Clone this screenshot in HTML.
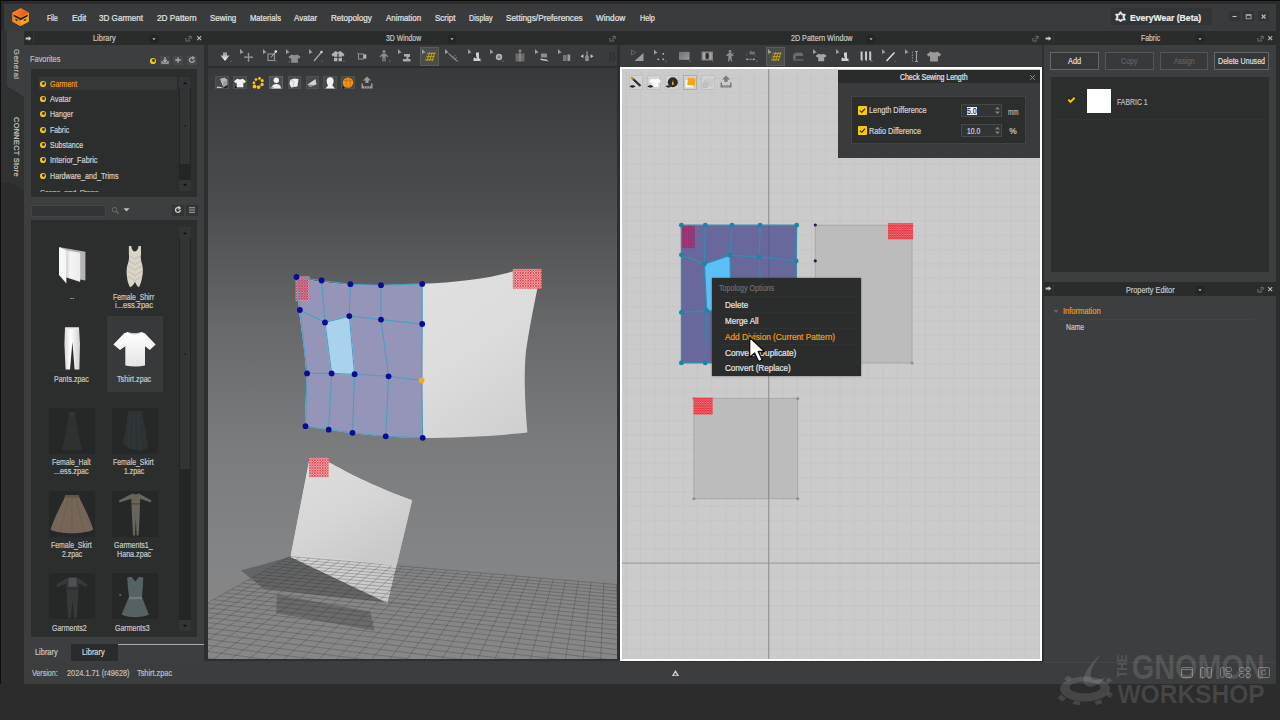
<!DOCTYPE html>
<html><head><meta charset="utf-8"><title>EveryWear</title>
<style>
html,body{margin:0;padding:0;background:#2b2c2b;}
body{width:1280px;height:720px;position:relative;overflow:hidden;font-family:"Liberation Sans",sans-serif;}
#app div,#app span,#app svg{position:absolute;box-sizing:border-box;}
#app span{white-space:pre;-webkit-text-stroke:0.22px currentColor;}
</style></head><body><div id="app">
<div style="left:0px;top:0px;width:1280px;height:4px;background:#2a2b2b;"></div>
<div style="left:0px;top:0px;width:1280px;height:1.4px;background:#0c0c0c;"></div>
<div style="left:4px;top:3.5px;width:1272px;height:680.5px;background:#3a3b3d;"></div>
<div style="left:0px;top:0px;width:4px;height:720px;background:#2a2b2b;"></div>
<div style="left:0px;top:0px;width:1.3px;height:720px;background:#0e0e0e;"></div>
<div style="left:4px;top:31px;width:20px;height:653px;background:#2b2c2b;"></div>
<div style="left:24px;top:31px;width:1252px;height:14px;background:#2a2b2b;"></div>
<span style="left:47.30px;top:11.95px;font-size:8.8px;line-height:12.3px;color:#e2e2e2;transform-origin:0 50%;transform:scaleX(0.7617);">File</span>
<span style="left:71.70px;top:11.95px;font-size:8.8px;line-height:12.3px;color:#e2e2e2;transform-origin:0 50%;transform:scaleX(0.9431);">Edit</span>
<span style="left:99.00px;top:11.95px;font-size:8.8px;line-height:12.3px;color:#e2e2e2;transform-origin:0 50%;transform:scaleX(0.9202);">3D Garment</span>
<span style="left:156.70px;top:11.95px;font-size:8.8px;line-height:12.3px;color:#e2e2e2;transform-origin:0 50%;transform:scaleX(0.9390);">2D Pattern</span>
<span style="left:209.80px;top:11.95px;font-size:8.8px;line-height:12.3px;color:#e2e2e2;transform-origin:0 50%;transform:scaleX(0.9113);">Sewing</span>
<span style="left:249.70px;top:11.95px;font-size:8.8px;line-height:12.3px;color:#e2e2e2;transform-origin:0 50%;transform:scaleX(0.8684);">Materials</span>
<span style="left:294.00px;top:11.95px;font-size:8.8px;line-height:12.3px;color:#e2e2e2;transform-origin:0 50%;transform:scaleX(0.9140);">Avatar</span>
<span style="left:330.60px;top:11.95px;font-size:8.8px;line-height:12.3px;color:#e2e2e2;transform-origin:0 50%;transform:scaleX(0.9188);">Retopology</span>
<span style="left:385.60px;top:11.95px;font-size:8.8px;line-height:12.3px;color:#e2e2e2;transform-origin:0 50%;transform:scaleX(0.8970);">Animation</span>
<span style="left:434.70px;top:11.95px;font-size:8.8px;line-height:12.3px;color:#e2e2e2;transform-origin:0 50%;transform:scaleX(0.9114);">Script</span>
<span style="left:468.70px;top:11.95px;font-size:8.8px;line-height:12.3px;color:#e2e2e2;transform-origin:0 50%;transform:scaleX(0.8179);">Display</span>
<span style="left:506.00px;top:11.95px;font-size:8.8px;line-height:12.3px;color:#e2e2e2;transform-origin:0 50%;transform:scaleX(0.9390);">Settings/Preferences</span>
<span style="left:596.00px;top:11.95px;font-size:8.8px;line-height:12.3px;color:#e2e2e2;transform-origin:0 50%;transform:scaleX(0.9298);">Window</span>
<span style="left:639.50px;top:11.95px;font-size:8.8px;line-height:12.3px;color:#e2e2e2;transform-origin:0 50%;transform:scaleX(0.8233);">Help</span>
<div style="left:24px;top:45px;width:180px;height:617px;background:#3d3e40;"></div>
<div style="left:31px;top:69px;width:166px;height:128px;background:#2c2d2d;"></div>
<div style="left:31px;top:220px;width:166px;height:417px;background:#2c2d2d;"></div>
<div style="left:206.5px;top:46px;width:411px;height:20px;background:#3a3b3d;"></div>
<div id="v3d" style="left:207.6px;top:68px;width:409.4px;height:591.2px;background:linear-gradient(#38393b 0%,#3c3d3f 4.6%,#4d4e50 24%,#676869 43.5%,#7a7b7c 63%,#838485 82%,#878788 100%);"></div>
<div style="left:621px;top:46px;width:421px;height:20px;background:#3a3b3d;"></div>
<div style="left:620.3px;top:67px;width:421.6px;height:593.8px;background:#ffffff;"></div>
<div style="left:622px;top:68.6px;width:417.7px;height:590px;background:#cbcbcb;"></div>
<div style="left:1044px;top:45px;width:232px;height:617px;background:#3d3e40;"></div>
<div style="left:1051px;top:77px;width:218px;height:195px;background:#2c2d2d;"></div>
<div style="left:1044px;top:282.4px;width:232px;height:14px;background:#2a2b2b;"></div>
<div style="left:204.3px;top:45px;width:3.3px;height:615.8px;background:#2e2f30;"></div>
<div style="left:204.3px;top:659.2px;width:413px;height:1.6px;background:#2f3031;"></div>
<div style="left:617px;top:45px;width:3.3px;height:616px;background:#2e2f30;"></div>
<div style="left:1041.9px;top:45px;width:1.8px;height:616.8px;background:#2e2f30;"></div>
<div style="left:620.3px;top:660.8px;width:421.6px;height:0.9px;background:#2e2f30;"></div>
<div style="left:24px;top:661.5px;width:1252px;height:22.3px;background:#3c3d3f;"></div>
<div style="left:1.3px;top:31px;width:5.7px;height:653px;background:#2b2c2b;"></div>
<div style="left:1.3px;top:31px;width:5.7px;height:152px;background:#313233;"></div>
<svg style="left:0;top:31px" width="24" height="160" viewBox="0 0 24 160"><path d="M7 0H24V66L7 55.5Z" fill="#3d3e40"/><path d="M7 56.5L24 67V159L7 150Z" fill="#303131"/></svg>
<span style="left:22.2px;top:48.5px;font-size:7.6px;line-height:12px;color:#b9b9b9;letter-spacing:0.495px;transform-origin:0 0;transform:rotate(90deg);">General</span>
<span style="left:22.2px;top:116.5px;font-size:7.4px;line-height:12px;color:#c4c4c4;letter-spacing:0.293px;transform-origin:0 0;transform:rotate(90deg);">CONNECT Store</span>
<svg style="left:23.5px;top:33.5px" width="9" height="9" viewBox="0 0 9 9"><path d="M1.6 3.5H4.6V2.2L7.4 4.5L4.6 6.8V5.5H1.6Z" fill="#c9c9c9"/></svg>
<div style="left:32.5px;top:33px;width:1px;height:11px;background:#353636;"></div>
<span style="left:93.00px;top:33.20px;font-size:8.4px;line-height:11.8px;color:#c4c4c4;transform-origin:0 50%;transform:scaleX(0.8842);">Library</span>
<svg style="left:149px;top:33.5px" width="10" height="10" viewBox="0 0 10 10"><circle cx="5" cy="5" r="4.6" fill="#232424"/><path d="M3.4 4.2H6.6L5 6.2Z" fill="#bdbdbd"/></svg>
<svg style="left:184.8px;top:34.6px" width="7" height="7" viewBox="0 0 8 8"><path d="M1 3.5V7H5V5M4 1.5H7V4.5M7 1.5L3.5 5" fill="none" stroke="#707172" stroke-width="1.1"/></svg>
<svg style="left:195.8px;top:34.8px" width="6.4" height="6.4" viewBox="0 0 8 8"><path d="M1.5 1.5L6.5 6.5M6.5 1.5L1.5 6.5" fill="none" stroke="#bdbdbd" stroke-width="1.3"/></svg>
<span style="left:30.00px;top:54.20px;font-size:8.4px;line-height:11.8px;color:#bdbdbd;transform-origin:0 50%;transform:scaleX(0.8830);">Favorites</span>
<svg style="left:148.5px;top:56.5px" width="8" height="8" viewBox="0 0 8 8"><circle cx="4" cy="4" r="3.1" fill="#f0c21a"/><circle cx="4.5" cy="3.5" r="1.45" fill="#4a2c1c"/></svg>
<div style="left:159.5px;top:55.6px;width:10.3px;height:9.7px;background:#47484a;"></div>
<svg style="left:160.7px;top:56.4px" width="8" height="8" viewBox="0 0 8 8"><path d="M4 1V5.5M2.3 4L4 5.8L5.7 4M1 5V7.2H7V5" fill="none" stroke="#ababab" stroke-width="1.3"/></svg>
<div style="left:173px;top:55.6px;width:10.3px;height:9.7px;background:#47484a;"></div>
<svg style="left:174.2px;top:56.4px" width="8" height="8" viewBox="0 0 8 8"><path d="M4 1.2V6.8M1.2 4H6.8" fill="none" stroke="#ababab" stroke-width="1.3"/></svg>
<div style="left:187px;top:55.6px;width:10.3px;height:9.7px;background:#47484a;"></div>
<svg style="left:188.2px;top:56.4px" width="8" height="8" viewBox="0 0 8 8"><path d="M6.3 4A2.4 2.4 0 1 1 4.6 1.7M4.3 0.6L6 1.9L4.4 3.2" fill="none" stroke="#ababab" stroke-width="1.3"/></svg>
<div style="left:38.5px;top:77px;width:138.5px;height:13px;background:#363738;"></div>
<svg style="left:39.3px;top:79.7px" width="8" height="8" viewBox="0 0 8 8"><circle cx="4" cy="4" r="3.1" fill="#f0c21a"/><circle cx="4.5" cy="3.5" r="1.45" fill="#4a2c1c"/></svg>
<span style="left:49.50px;top:78.70px;font-size:8.4px;line-height:11.8px;color:#f39c12;transform-origin:0 50%;transform:scaleX(0.8324);">Garment</span>
<svg style="left:39.3px;top:95.0px" width="8" height="8" viewBox="0 0 8 8"><circle cx="4" cy="4" r="3.1" fill="#f0c21a"/><circle cx="4.5" cy="3.5" r="1.45" fill="#4a2c1c"/></svg>
<span style="left:49.50px;top:94.00px;font-size:8.4px;line-height:11.8px;color:#cfcfcf;transform-origin:0 50%;transform:scaleX(0.8788);">Avatar</span>
<svg style="left:39.3px;top:110.3px" width="8" height="8" viewBox="0 0 8 8"><circle cx="4" cy="4" r="3.1" fill="#f0c21a"/><circle cx="4.5" cy="3.5" r="1.45" fill="#4a2c1c"/></svg>
<span style="left:49.50px;top:109.30px;font-size:8.4px;line-height:11.8px;color:#cfcfcf;transform-origin:0 50%;transform:scaleX(0.8422);">Hanger</span>
<svg style="left:39.3px;top:125.5px" width="8" height="8" viewBox="0 0 8 8"><circle cx="4" cy="4" r="3.1" fill="#f0c21a"/><circle cx="4.5" cy="3.5" r="1.45" fill="#4a2c1c"/></svg>
<span style="left:49.50px;top:124.50px;font-size:8.4px;line-height:11.8px;color:#cfcfcf;transform-origin:0 50%;transform:scaleX(0.8228);">Fabric</span>
<svg style="left:39.3px;top:140.89999999999998px" width="8" height="8" viewBox="0 0 8 8"><circle cx="4" cy="4" r="3.1" fill="#f0c21a"/><circle cx="4.5" cy="3.5" r="1.45" fill="#4a2c1c"/></svg>
<span style="left:49.50px;top:139.90px;font-size:8.4px;line-height:11.8px;color:#cfcfcf;transform-origin:0 50%;transform:scaleX(0.8364);">Substance</span>
<svg style="left:39.3px;top:156.2px" width="8" height="8" viewBox="0 0 8 8"><circle cx="4" cy="4" r="3.1" fill="#f0c21a"/><circle cx="4.5" cy="3.5" r="1.45" fill="#4a2c1c"/></svg>
<span style="left:49.50px;top:155.20px;font-size:8.4px;line-height:11.8px;color:#cfcfcf;transform-origin:0 50%;transform:scaleX(0.8809);">Interior_Fabric</span>
<svg style="left:39.3px;top:171.5px" width="8" height="8" viewBox="0 0 8 8"><circle cx="4" cy="4" r="3.1" fill="#f0c21a"/><circle cx="4.5" cy="3.5" r="1.45" fill="#4a2c1c"/></svg>
<span style="left:49.50px;top:170.50px;font-size:8.4px;line-height:11.8px;color:#cfcfcf;transform-origin:0 50%;transform:scaleX(0.8540);">Hardware_and_Trims</span>
<div style="left:38px;top:188px;width:70px;height:4px;overflow:hidden"><span style="left:2px;top:-1px;font-size:7.8px;line-height:11px;color:#bcbcbc;letter-spacing:-0.4px">Scene_and_Props</span></div>
<div style="left:178.5px;top:77px;width:12px;height:113.5px;background:#242525;"></div>
<div style="left:179.5px;top:88px;width:10px;height:76px;background:#323334;"></div>
<div style="left:178.5px;top:77px;width:12px;height:11px;background:#333435;"></div>
<div style="left:178.5px;top:179.5px;width:12px;height:11px;background:#333435;"></div>
<svg style="left:181.5px;top:79.5px" width="6" height="6" viewBox="0 0 6 6"><path d="M1 4.2L3 1.8L5 4.2Z" fill="#111"/></svg>
<svg style="left:181.5px;top:182.0px" width="6" height="6" viewBox="0 0 6 6"><path d="M1 1.8L3 4.2L5 1.8Z" fill="#111"/></svg>
<div style="left:183.5px;top:125.0px;width:2px;height:2px;background:#262727;"></div>
<div style="left:31px;top:205px;width:74.5px;height:11.5px;background:#333435;border:1px solid #434445;"></div>
<svg style="left:110px;top:205px" width="26" height="11" viewBox="0 0 26 11"><circle cx="4.6" cy="4.6" r="2.3" fill="none" stroke="#6e6e6e" stroke-width="1"/><path d="M6.4 6.4L8.6 8.6" stroke="#6e6e6e" stroke-width="1.2"/><path d="M13.5 3.2H19.5L16.5 6.6Z" fill="#c4c4c4"/></svg>
<div style="left:172px;top:204.5px;width:11.5px;height:11.5px;background:#333435;"></div>
<div style="left:186px;top:204.5px;width:11.5px;height:11.5px;background:#333435;"></div>
<svg style="left:173.7px;top:206.2px" width="8" height="8" viewBox="0 0 8 8"><path d="M6.3 4A2.4 2.4 0 1 1 4.6 1.7M4.3 0.4L6.2 1.9L4.4 3.4" fill="none" stroke="#cdcdcd" stroke-width="1.35"/></svg>
<svg style="left:187.7px;top:206.2px" width="8" height="8" viewBox="0 0 8 8"><path d="M1 1.5H7M1 3.2H7M1 4.9H7M1 6.6H7" fill="none" stroke="#8d8d8d" stroke-width="1"/></svg>
<div style="left:178.5px;top:227px;width:12px;height:404px;background:#242525;"></div>
<div style="left:179.5px;top:238px;width:10px;height:231px;background:#323334;"></div>
<div style="left:178.5px;top:227px;width:12px;height:11px;background:#333435;"></div>
<div style="left:178.5px;top:620px;width:12px;height:11px;background:#333435;"></div>
<svg style="left:181.5px;top:229.5px" width="6" height="6" viewBox="0 0 6 6"><path d="M1 4.2L3 1.8L5 4.2Z" fill="#111"/></svg>
<svg style="left:181.5px;top:622.5px" width="6" height="6" viewBox="0 0 6 6"><path d="M1 1.8L3 4.2L5 1.8Z" fill="#111"/></svg>
<div style="left:183.5px;top:352.5px;width:2px;height:2px;background:#262727;"></div>
<div style="left:71px;top:644px;width:46.5px;height:16.5px;background:#2a2b2c;"></div>
<div style="left:117.5px;top:643.9px;width:86.8px;height:1.2px;background:#a9a9a9;"></div>
<span style="left:35.00px;top:647.20px;font-size:8.4px;line-height:11.8px;color:#c4c4c4;transform-origin:0 50%;transform:scaleX(0.8842);">Library</span>
<span style="left:81.50px;top:646.70px;font-size:8.4px;line-height:11.8px;color:#d6d6d6;transform-origin:0 50%;transform:scaleX(0.8842);">Library</span>
<span style="left:31.50px;top:668.00px;font-size:8.4px;line-height:11.8px;color:#bdbdbd;transform-origin:0 50%;transform:scaleX(0.8468);">Version:</span>
<span style="left:66.50px;top:668.00px;font-size:8.4px;line-height:11.8px;color:#bdbdbd;transform-origin:0 50%;transform:scaleX(0.8776);">2024.1.71 (r49628)</span>
<span style="left:136.50px;top:668.00px;font-size:8.4px;line-height:11.8px;color:#bdbdbd;transform-origin:0 50%;transform:scaleX(0.8768);">Tshirt.zpac</span>
<svg style="left:56px;top:244px" width="32" height="44" viewBox="56 244 32 44">
<defs><linearGradient id="fg1" x1="0" y1="0" x2="1" y2="0"><stop offset="0" stop-color="#d0d0d0"/><stop offset="0.25" stop-color="#f4f4f4"/><stop offset="1" stop-color="#ececec"/></linearGradient></defs>
<path d="M60 247.2L85.4 251.8V280.4L80 279.5V282L66.4 277.5Z" fill="#b4b4b4"/>
<path d="M66.4 250.4L80.2 252.8V281.6L66.4 277.2Z" fill="url(#fg1)"/>
<path d="M59 247L66.4 250.2V283.6L59 275Z" fill="#f7f7f7"/>
</svg>
<span style="left:69.67px;top:290.90px;font-size:8.4px;line-height:11.8px;color:#c6c6c6;">..</span>
<svg style="left:122px;top:243px" width="26" height="46" viewBox="122 243 26 46">
<path d="M128.8 246.2C129.6 245.8 130.8 245.8 131.4 246.3C131.6 249 132.6 251.2 134.8 251.6C137 251.2 138.2 249 138.5 246.3C139.2 245.8 140.3 245.8 141 246.2C140.8 250 141.3 253 140.8 256C140.5 259 141.5 262 142.3 265C143.2 269 143 274 142 278C141.3 281.5 140.5 284.5 139 287.2C137.5 286.5 136 284.5 135 281.8C133.8 284.5 132 286.8 130 287.2C128.3 284 127.3 280.5 127 277C126.3 272 126.5 268 127.6 264.5C128.6 261.5 129.3 258.5 129 255.5C128.7 252.5 129 249.5 128.8 246.2Z" fill="#d8d4c6"/>
<path d="M130 256L134.8 259M129 261L134.8 264.5M128 266L134.8 270M127.6 271L134.8 275.5M128 276.5L134.6 280.5M139.8 256L134.8 259M140.8 261L134.8 264.5M141.8 266L134.8 270M142.2 271L134.8 275.5M141.6 276.5L135 280.5" stroke="#b7b2a3" stroke-width="0.7" fill="none"/>
</svg>
<span style="left:113.20px;top:291.60px;font-size:8.4px;line-height:11.8px;color:#c6c6c6;transform-origin:0 50%;transform:scaleX(0.8192);">Female_Shirr</span>
<span style="left:114.70px;top:300.30px;font-size:8.4px;line-height:11.8px;color:#c6c6c6;transform-origin:0 50%;transform:scaleX(0.9116);">i...ess.zpac</span>
<svg style="left:60.7px;top:326px" width="22" height="46" viewBox="0 0 22 46">
<defs><linearGradient id="pg" x1="0" y1="0" x2="1" y2="0"><stop offset="0" stop-color="#d8d8d8"/><stop offset="0.4" stop-color="#ffffff"/><stop offset="1" stop-color="#cfcfcf"/></linearGradient></defs>
<path d="M4 1.5H18L19 18L18.4 43.5H13.6L11.4 16L9 43.5H4.6L3.4 18Z" fill="url(#pg)"/>
<path d="M4 1.5H18V3.2H4Z" fill="#e8e8e8"/>
</svg>
<div style="left:48.5px;top:369.6px;width:17px;height:1.2px;background:#323333;"></div>
<span style="left:53.75px;top:374.20px;font-size:8.4px;line-height:11.8px;color:#c6c6c6;transform-origin:0 50%;transform:scaleX(0.8374);">Pants.zpac</span>
<div style="left:106.5px;top:316px;width:56px;height:76px;background:#38393b;"></div>
<svg style="left:111px;top:329px" width="46" height="40" viewBox="111 329 46 40">
<defs><linearGradient id="tg" x1="0" y1="0" x2="0" y2="1"><stop offset="0" stop-color="#ffffff"/><stop offset="1" stop-color="#e4e4e4"/></linearGradient></defs>
<path d="M127.8 332C130.5 334 138.5 334 141.2 332L144.8 333.2L155.6 344.6L149.8 350L145 346.2V365.4C139 366.8 131.5 366.8 125.3 365.4V346.2L120 350L113.4 344.6L124.2 333.2Z" fill="url(#tg)"/>
<path d="M127.8 332C130.5 335.2 138.5 335.2 141.2 332C138.5 333.4 130.5 333.4 127.8 332Z" fill="#c4c4c4"/>
</svg>
<span style="left:116.70px;top:374.20px;font-size:8.4px;line-height:11.8px;color:#c6c6c6;transform-origin:0 50%;transform:scaleX(0.8544);">Tshirt.zpac</span>
<svg style="left:49px;top:408px" width="46" height="46" viewBox="0 0 46 46"><rect width="46" height="46" fill="#262727"/><path d="M20 4H26L27 12L33 42H13L19 12Z" fill="#2f3030"/><path d="M21 4L23 9L25 4" stroke="#3a3a3a" fill="none"/></svg>
<svg style="left:111.5px;top:408px" width="46" height="46" viewBox="0 0 46 46"><rect width="46" height="46" fill="#262727"/><path d="M16 3H30L33 20L36 40L28 43L18 41L11 36L14 20Z" fill="#2d3335"/><path d="M18 6L16 38M22 6L22 41M26 6L28 42" stroke="#353c3f" stroke-width="0.8"/></svg>
<span style="left:52.45px;top:457.20px;font-size:8.4px;line-height:11.8px;color:#c6c6c6;transform-origin:0 50%;transform:scaleX(0.8148);">Female_Halt</span>
<span style="left:54.45px;top:466.10px;font-size:8.4px;line-height:11.8px;color:#c6c6c6;transform-origin:0 50%;transform:scaleX(0.8668);">...ess.zpac</span>
<span style="left:113.45px;top:457.20px;font-size:8.4px;line-height:11.8px;color:#c6c6c6;transform-origin:0 50%;transform:scaleX(0.8246);">Female_Skirt</span>
<span style="left:123.70px;top:466.10px;font-size:8.4px;line-height:11.8px;color:#c6c6c6;transform-origin:0 50%;transform:scaleX(0.8203);">1.zpac</span>
<svg style="left:49px;top:491px" width="46" height="46" viewBox="0 0 46 46"><rect width="46" height="46" fill="#262727"/><path d="M16.5 4H29.3L31 8C36 18 41 28 44.3 38.5C36 43.5 10 43.5 1.5 38.5C5 28 10 18 15 8Z" fill="#76665a"/><path d="M16.5 4H29.3L30.5 7H15.5Z" fill="#665848"/><path d="M19 8L11 41M23 8V42.3M27 8L35 41" stroke="#6b5c4f" stroke-width="0.9"/></svg>
<svg style="left:111.5px;top:491px" width="46" height="46" viewBox="0 0 46 46"><rect width="46" height="46" fill="#262727"/><path d="M20.5 2.5L23.8 3.5L27 2.5L39.5 9.6L38.8 11.6L28.3 7.8L28 13L27.6 26L26.6 44.5H24.6L23.8 27L23 44.5H21L20 26L19.5 13L19.3 7.8L7.5 11.6L6.8 9.6Z" fill="#67655a"/><path d="M19.5 12H28V13.6H19.5Z" fill="#4f4d45"/></svg>
<span style="left:51.45px;top:539.90px;font-size:8.4px;line-height:11.8px;color:#c6c6c6;transform-origin:0 50%;transform:scaleX(0.8246);">Female_Skirt</span>
<span style="left:61.70px;top:548.70px;font-size:8.4px;line-height:11.8px;color:#c6c6c6;transform-origin:0 50%;transform:scaleX(0.8203);">2.zpac</span>
<span style="left:114.45px;top:539.90px;font-size:8.4px;line-height:11.8px;color:#c6c6c6;transform-origin:0 50%;transform:scaleX(0.8395);">Garments1_</span>
<span style="left:116.70px;top:548.70px;font-size:8.4px;line-height:11.8px;color:#c6c6c6;transform-origin:0 50%;transform:scaleX(0.8542);">Hana.zpac</span>
<svg style="left:49px;top:573px" width="46" height="46" viewBox="0 0 46 46"><rect width="46" height="46" fill="#262727"/><path d="M17 5.5L21 4H26L30 5.5L38.5 11.5L37.5 14L29.5 10.5V15.5L28.8 30L27.8 45H25.2L23.5 27L21.8 45H19.2L18.2 30L17.5 15.5V10.5L8.5 14L7.5 11.5Z" fill="#37383a"/><path d="M19.5 5H27.5V13.5H19.5Z" fill="#4f5052"/><path d="M17.5 15H29.5V16.5H17.5Z" fill="#2d2e2f"/></svg>
<svg style="left:111.5px;top:573px" width="46" height="46" viewBox="0 0 46 46"><rect width="46" height="46" fill="#262727"/><path d="M15.2 4.5L19.5 3.8L23.3 8.5L27 3.8L31.3 4.5L30.8 14L30 24L36.8 41.5C30 45 16 45 9.5 41.5L17 24L15.8 14Z" fill="#566164"/><path d="M17 23.8H30V26.2H17Z" fill="#707a7b"/><circle cx="8.2" cy="22" r="1" fill="#6a6a62"/></svg>
<span style="left:52.25px;top:622.60px;font-size:8.4px;line-height:11.8px;color:#c6c6c6;transform-origin:0 50%;transform:scaleX(0.8376);">Garments2</span>
<span style="left:114.85px;top:622.60px;font-size:8.4px;line-height:11.8px;color:#c6c6c6;transform-origin:0 50%;transform:scaleX(0.8376);">Garments3</span>
<div style="left:420px;top:46.5px;width:19px;height:19px;background:#4b4c4e;border:1px solid #5b5c5e;"></div>
<svg style="left:216.5px;top:48.0px" width="16" height="16" viewBox="0 0 16 16"><defs><linearGradient id="da" x1="0" y1="0" x2="0" y2="1"><stop offset="0" stop-color="#8a8a8a"/><stop offset="1" stop-color="#ffffff"/></linearGradient></defs><path d="M6 4.3H10V7.6H12.6L8 12.9L3.4 7.6H6Z" fill="url(#da)"/><rect x="13.3" y="12.6" width="1.3" height="1.3" fill="#6d6d6d"/></svg>
<svg style="left:238.5px;top:48.0px" width="16" height="16" viewBox="0 0 16 16"><path d="M1 1L1 6.2L2.6 4.9L4.6 4.6Z" fill="#9d9d9d"/><path d="M9.5 5.5V13M5.8 9.2H13.2" stroke="#9a9a9a" stroke-width="1.2"/><path d="M9.5 4.5L10.7 6.2H8.3ZM9.5 14L10.7 12.3H8.3ZM4.8 9.2L6.5 8V10.4ZM14.2 9.2L12.5 8V10.4Z" fill="#9a9a9a"/></svg>
<svg style="left:262.0px;top:48.0px" width="16" height="16" viewBox="0 0 16 16"><path d="M1 1L1 6.2L2.6 4.9L4.6 4.6Z" fill="#9d9d9d"/><rect x="6" y="6" width="6.5" height="6.5" fill="none" stroke="#909090" stroke-width="1.2"/><path d="M9 9.5L13.5 4" stroke="#b9b9b9" stroke-width="1"/><circle cx="13.8" cy="3.6" r="1.3" fill="#e6e6e6"/><rect x="13.3" y="12.6" width="1.3" height="1.3" fill="#6d6d6d"/></svg>
<svg style="left:285.0px;top:48.0px" width="16" height="16" viewBox="0 0 16 16"><path d="M1 1L1 6.2L2.6 4.9L4.6 4.6Z" fill="#9d9d9d"/><path d="M5.2 4.6C6.5 5.6 9.5 5.6 10.8 4.6L14 7L12.5 9L11.3 8.2V13H4.7V8.2L3.5 9L2 7Z" fill="#8f8f8f" transform="translate(1.5,1.8)"/><path d="M5 13.5L3.8 14.5M12 13.5L13.2 14.5" stroke="#8f8f8f"/></svg>
<svg style="left:307.5px;top:48.0px" width="16" height="16" viewBox="0 0 16 16"><path d="M1 1L1 6.2L2.6 4.9L4.6 4.6Z" fill="#9d9d9d"/><path d="M6 13L13.2 4.5" stroke="#a9a9a9" stroke-width="1.2"/><circle cx="13.5" cy="4" r="1.2" fill="#dcdcdc"/><rect x="13.3" y="12.6" width="1.3" height="1.3" fill="#6d6d6d"/></svg>
<svg style="left:330.0px;top:48.0px" width="16" height="16" viewBox="0 0 16 16"><path d="M5.5 3L8 4.2L10.5 3L14.5 6.5L13.2 8.4L12 7.6V13.2H8.6V5.5H7.4V13.2H4V7.6L2.8 8.4L1.5 6.5Z" fill="#b4b4b4"/><path d="M4 9.3H12" stroke="#3a3b3d" stroke-width="1"/><rect x="13.3" y="12.6" width="1.3" height="1.3" fill="#6d6d6d"/></svg>
<svg style="left:352.5px;top:48.0px" width="16" height="16" viewBox="0 0 16 16"><rect x="5.5" y="6" width="5" height="5" fill="none" stroke="#8f8f8f" stroke-width="1.1"/><path d="M10.5 7L13.2 6V11L10.5 10Z" fill="#b9b9b9"/><rect x="4" y="4.5" width="1.2" height="1.2" fill="#777"/></svg>
<svg style="left:375.5px;top:48.0px" width="16" height="16" viewBox="0 0 16 16"><circle cx="8" cy="3.6" r="1.5" fill="#8d8d8d"/><path d="M6.6 5.5H9.4L12.4 8.3L11.6 9.2L9.6 7.8V13.5H8.4V10H7.6V13.5H6.4V7.8L4.4 9.2L3.6 8.3Z" fill="#8d8d8d"/><rect x="13.3" y="12.6" width="1.3" height="1.3" fill="#6d6d6d"/></svg>
<svg style="left:397.0px;top:48.0px" width="16" height="16" viewBox="0 0 16 16"><path d="M1 1L1 6.2L2.6 4.9L4.6 4.6Z" fill="#9d9d9d"/><path d="M7 6H13V9H11.5V11H13.5V13.5H6V11H9.5V8.5H7Z" fill="#a9a9a9"/></svg>
<svg style="left:421.0px;top:48.0px" width="16" height="16" viewBox="0 0 16 16"><path d="M1 1L1 6.2L2.6 4.9L4.6 4.6Z" fill="#9d9d9d"/><g stroke="#d4ae00" stroke-width="0.85" fill="none"><path d="M6.2 5.4H14.4M5.2 8.6H13.4M4.2 11.8H12.4"/><path d="M8.6 4.2L6 13M11.2 4.2L8.6 13M13.8 4.2L11.2 13"/></g><path d="M6.4 4.6L4 12.6" stroke="#7c6a10" stroke-width="0.8"/></svg>
<svg style="left:443.5px;top:48.0px" width="16" height="16" viewBox="0 0 16 16"><path d="M1 1L1 6.2L2.6 4.9L4.6 4.6Z" fill="#9d9d9d"/><path d="M4.5 5.5L13 13" stroke="#8a8a8a" stroke-width="1.2"/><path d="M8 10.5L11.5 7M10 12L13 9" stroke="#777" stroke-width="1"/><rect x="13.3" y="12.6" width="1.3" height="1.3" fill="#6d6d6d"/></svg>
<svg style="left:467.0px;top:48.0px" width="16" height="16" viewBox="0 0 16 16"><path d="M1 1L1 6.2L2.6 4.9L4.6 4.6Z" fill="#9d9d9d"/><path d="M9 4.5H12V10.5H13.5V13H6.5V10.5L9 8Z" fill="#cfcfcf"/><path d="M6.5 7L9.5 10" stroke="#2a2a2a" stroke-width="1.4"/><rect x="13.3" y="12.6" width="1.3" height="1.3" fill="#6d6d6d"/></svg>
<svg style="left:488.5px;top:48.0px" width="16" height="16" viewBox="0 0 16 16"><path d="M1 1L1 6.2L2.6 4.9L4.6 4.6Z" fill="#9d9d9d"/><circle cx="10" cy="9" r="3.2" fill="#b5b5b5"/><rect x="8.6" y="7.6" width="2.8" height="2.8" fill="#7d7d7d"/><rect x="13.3" y="12.6" width="1.3" height="1.3" fill="#6d6d6d"/></svg>
<svg style="left:511.5px;top:48.0px" width="16" height="16" viewBox="0 0 16 16"><circle cx="8" cy="2.8" r="1.4" fill="#8d8d8d"/><path d="M3.5 5.5H12.5V13.5H3.5Z" fill="#6b6b6b"/><path d="M7.2 4.5H8.8V13.5H7.2Z" fill="#8b8b8b"/></svg>
<svg style="left:534.0px;top:48.0px" width="16" height="16" viewBox="0 0 16 16"><path d="M1 1L1 6.2L2.6 4.9L4.6 4.6Z" fill="#9d9d9d"/><path d="M7 5.5H13V9.5H7Z" fill="#8d8d8d"/><path d="M6.5 10.5L13.5 11.8V13.2L6.5 12Z" fill="#c6c6c6"/><rect x="13.3" y="12.6" width="1.3" height="1.3" fill="#6d6d6d"/></svg>
<svg style="left:557.0px;top:48.0px" width="16" height="16" viewBox="0 0 16 16"><path d="M1 1L1 6.2L2.6 4.9L4.6 4.6Z" fill="#9d9d9d"/><path d="M6 7H9.6V13H6Z" fill="#777"/><path d="M10.4 6.5H13.2V13H10.4Z" fill="#9b9b9b"/></svg>
<svg style="left:579.0px;top:48.0px" width="16" height="16" viewBox="0 0 16 16"><path d="M7.3 3.5H8.7V7L9.8 8.5V13H6.2V8.5L7.3 7Z" fill="#8f8f8f"/><path d="M1.5 8.2L4.4 6.3V10.1ZM14.5 8.2L11.6 6.3V10.1Z" fill="#c9c9c9"/></svg>
<svg style="left:608px;top:51px" width="9" height="12" viewBox="0 0 9 12"><path d="M1.5 1.5C3.5 4 3.5 8 1.5 10.5M5 1.5C7 4 7 8 5 10.5" fill="none" stroke="#2b2c2c" stroke-width="1.3"/></svg>
<div style="left:206.5px;top:66px;width:411px;height:2px;background:#2b2c2d;"></div>
<div style="left:766px;top:46.5px;width:19px;height:19px;background:#4b4c4e;border:1px solid #5b5c5e;"></div>
<svg style="left:630.0px;top:48.0px" width="16" height="16" viewBox="0 0 16 16"><path d="M1.5 2L1.5 7L5.5 4.5Z" fill="none" stroke="#6a6a6a" stroke-width="0.9"/><path d="M13.5 5V13H4.5Z" fill="#9a9a9a"/></svg>
<svg style="left:652.0px;top:48.0px" width="16" height="16" viewBox="0 0 16 16"><path d="M2 1.5L2 6.7L3.6 5.4L5.6 5.1Z" fill="#9d9d9d"/><g fill="#b5b5b5"><rect x="10.5" y="5" width="1.6" height="1.6"/><rect x="5.5" y="10.5" width="1.6" height="1.6"/><rect x="10.5" y="10.5" width="1.6" height="1.6"/></g><rect x="13.3" y="12.6" width="1.3" height="1.3" fill="#6d6d6d"/></svg>
<svg style="left:676.0px;top:48.0px" width="16" height="16" viewBox="0 0 16 16"><defs><linearGradient id="rg" x1="0" y1="0" x2="1" y2="1"><stop offset="0" stop-color="#707070"/><stop offset="1" stop-color="#9c9c9c"/></linearGradient></defs><rect x="3" y="3.8" width="10.5" height="8" fill="url(#rg)"/><rect x="13.3" y="12.6" width="1.3" height="1.3" fill="#6d6d6d"/></svg>
<svg style="left:698.5px;top:48.0px" width="16" height="16" viewBox="0 0 16 16"><rect x="2.5" y="3.5" width="11.5" height="9" fill="#808080"/><rect x="4" y="4.5" width="2" height="7" fill="#a9a9a9"/><rect x="10.5" y="4.5" width="2" height="7" fill="#a9a9a9"/><ellipse cx="8.2" cy="8" rx="1.6" ry="3" fill="#2b2b2b"/><rect x="13.3" y="12.6" width="1.3" height="1.3" fill="#6d6d6d"/></svg>
<svg style="left:722.0px;top:48.0px" width="16" height="16" viewBox="0 0 16 16"><circle cx="8" cy="3.4" r="1.4" fill="#8d8d8d"/><path d="M6.8 5H9.2L11.8 7.2L11 8.2L9.6 7.4V10L10.2 13.5H9L8 10.5L7 13.5H5.8L6.4 10V7.4L5 8.2L4.2 7.2Z" fill="#8d8d8d"/><path d="M10.5 4.5L12 6" stroke="#6a6a6a"/></svg>
<svg style="left:743.0px;top:48.0px" width="16" height="16" viewBox="0 0 16 16"><path d="M6.5 3.5C7.5 2.5 9 3 9.5 4C10.5 3 12 3.5 12 5V6.5H6.5Z" fill="#707070"/><g fill="#c4c4c4"><rect x="3.4" y="10.6" width="1.5" height="1.5"/><rect x="10.2" y="10.6" width="1.5" height="1.5"/></g><path d="M5.5 11.4H9.6" stroke="#8f8f8f" stroke-width="0.9"/><path d="M3.5 5V9M12.5 7.5V9.5" stroke="#606060" stroke-width="0.9" stroke-dasharray="1 1"/><rect x="13.3" y="12.6" width="1.3" height="1.3" fill="#6d6d6d"/></svg>
<svg style="left:767.0px;top:48.0px" width="16" height="16" viewBox="0 0 16 16"><path d="M1 1L1 6.2L2.6 4.9L4.6 4.6Z" fill="#9d9d9d"/><g stroke="#d4ae00" stroke-width="0.85" fill="none"><path d="M6.2 5.4H14.4M5.2 8.6H13.4M4.2 11.8H12.4"/><path d="M8.6 4.2L6 13M11.2 4.2L8.6 13M13.8 4.2L11.2 13"/></g><path d="M6.4 4.6L4 12.6" stroke="#7c6a10" stroke-width="0.8"/></svg>
<svg style="left:790.0px;top:48.0px" width="16" height="16" viewBox="0 0 16 16"><path d="M3 12.5V8.5C3 6 5 4.6 7.5 4.6H10.5C12 4.6 13 5.6 13 7V8H7C6 8 5.6 8.6 5.6 9.5V12.5Z" fill="#6c6c6c"/><path d="M3 11H13.5V12.8H3Z" fill="#5c5c5c"/></svg>
<svg style="left:811.5px;top:48.0px" width="16" height="16" viewBox="0 0 16 16"><path d="M1 1L1 6.2L2.6 4.9L4.6 4.6Z" fill="#9d9d9d"/><path d="M5.2 4.6C6.5 5.6 9.5 5.6 10.8 4.6L14 7L12.5 9L11.3 8.2V13H4.7V8.2L3.5 9L2 7Z" fill="#a5a5a5" transform="translate(2,1.5) scale(0.9)"/></svg>
<svg style="left:834.5px;top:48.0px" width="16" height="16" viewBox="0 0 16 16"><path d="M1 1L1 6.2L2.6 4.9L4.6 4.6Z" fill="#9d9d9d"/><path d="M9 4.5H12V10.5H13.5V13H6.5V10.5L9 8Z" fill="#cfcfcf"/><path d="M6.5 7L9.5 10" stroke="#2a2a2a" stroke-width="1.4"/><rect x="13.3" y="12.6" width="1.3" height="1.3" fill="#6d6d6d"/></svg>
<svg style="left:857.5px;top:48.0px" width="16" height="16" viewBox="0 0 16 16"><path d="M3.6 3.5V12M8 3.5V12M12.2 3.5V12" stroke="#c9c9c9" stroke-width="2"/><path d="M3.6 12L4.6 13M8 12L9 13M12.2 12L13.2 13" stroke="#9b9b9b" stroke-width="1.2"/><rect x="13.3" y="12.6" width="1.3" height="1.3" fill="#6d6d6d"/></svg>
<svg style="left:880.5px;top:48.0px" width="16" height="16" viewBox="0 0 16 16"><path d="M1 1L1 6.2L2.6 4.9L4.6 4.6Z" fill="#9d9d9d"/><path d="M5.5 13L13.5 4.5" stroke="#e0e0e0" stroke-width="1.4"/><rect x="13.3" y="12.6" width="1.3" height="1.3" fill="#6d6d6d"/></svg>
<svg style="left:903.5px;top:48.0px" width="16" height="16" viewBox="0 0 16 16"><path d="M1 1L1 6.2L2.6 4.9L4.6 4.6Z" fill="#9d9d9d"/><path d="M8.5 3.5V13.5" stroke="#7b7b7b" stroke-width="1.2" stroke-dasharray="1.6 1.2"/><path d="M12.5 3.5V13.5" stroke="#a0a0a0" stroke-width="1.1"/><path d="M11 3.5H14M11 13.5H14" stroke="#a0a0a0" stroke-width="0.9"/></svg>
<svg style="left:925.5px;top:48.0px" width="16" height="16" viewBox="0 0 16 16"><path d="M5.2 4.6C6.5 5.6 9.5 5.6 10.8 4.6L14 7L12.5 9L11.3 8.2V13H4.7V8.2L3.5 9L2 7Z" fill="#9a9a9a" transform="translate(-1.6,-2) scale(1.2)"/></svg>
<svg style="left:207.6px;top:68px" width="409.4" height="591.2" viewBox="207.6 68 409.4 591.2"><defs>
<pattern id="stamp" width="2.6" height="2.6" patternUnits="userSpaceOnUse"><rect width="2.6" height="2.6" fill="#eec0c0"/><path d="M-0.2 -0.2L2.8 2.8M2.8 -0.2L-0.2 2.8" stroke="#ec3c48" stroke-width="0.82" fill="none"/></pattern>
<linearGradient id="cl1" x1="0" y1="0" x2="1" y2="1"><stop offset="0" stop-color="#e2e2e2"/><stop offset="0.6" stop-color="#dcdcdc"/><stop offset="1" stop-color="#cdcdcd"/></linearGradient>
<linearGradient id="cl2" x1="0" y1="0" x2="0.6" y2="1"><stop offset="0" stop-color="#dedede"/><stop offset="0.55" stop-color="#d6d6d6"/><stop offset="1" stop-color="#c9c9c9"/></linearGradient>
</defs><path d="M240.6 570.6L289.5 556.8L387 603L445 608.3L330 596.5L263.5 588.8Z" fill="#000" fill-opacity="0.24"/><path d="M276.7 594.5L370 611.7L374.2 630.8L275.8 613.3Z" fill="#000" fill-opacity="0.2"/><path d="M309.2 458.4L327.7 461.9C340 468 360 481 411.7 500.2L387.1 603.1L290.2 556.9Z" fill="url(#cl2)"/><rect x="308.7" y="457.9" width="19.5" height="19.3" fill="url(#stamp)"/><path d="M289.5 556.5L656.0 588.0M285.3 558.9L656.7 591.3M281.0 561.3L657.4 594.6M276.6 563.8L658.1 598.1M272.1 566.3L658.8 601.7M267.4 568.9L659.6 605.3M262.7 571.6L660.4 609.1M257.8 574.4L661.2 613.1M252.7 577.2L662.0 617.1M247.5 580.2L662.9 621.4M242.2 583.2L663.8 625.7M236.7 586.3L664.7 630.2M231.0 589.5L665.7 634.9M225.1 592.8L666.7 639.8M219.1 596.2L667.7 644.8M212.9 599.7L668.8 650.0M206.4 603.3L669.9 655.5M199.8 607.0L671.1 661.1M193.0 610.9L672.3 667.0M185.9 614.9L673.6 673.2M178.5 619.0L674.9 679.6M170.9 623.3L676.3 686.3M163.1 627.7L677.7 693.3M154.9 632.3L679.2 700.6M146.5 637.1L680.8 708.2M137.7 642.0L682.4 716.2M128.6 647.1L684.2 724.7M119.2 652.5L686.0 733.5M109.4 658.0L687.9 742.8M99.1 663.8L689.9 752.6M88.5 669.8L692.1 762.9M77.4 676.0L694.3 773.8M289.5 556.5L77.4 676.0M299.3 557.3L92.0 678.4M309.2 558.2L106.9 680.7M319.2 559.1L122.0 683.1M329.3 559.9L137.4 685.5M339.5 560.8L153.0 688.0M349.7 561.7L168.9 690.5M360.1 562.6L185.0 693.1M370.6 563.5L201.4 695.7M381.1 564.4L218.0 698.3M391.8 565.3L235.0 701.0M402.6 566.2L252.2 703.7M413.5 567.2L269.7 706.5M424.5 568.1L287.5 709.3M435.6 569.1L305.6 712.2M446.8 570.0L324.0 715.1M458.1 571.0L342.8 718.1M469.6 572.0L361.8 721.1M481.1 573.0L381.2 724.2M492.8 574.0L401.0 727.3M504.6 575.0L421.1 730.5M516.5 576.0L441.6 733.8M528.5 577.1L462.5 737.1M540.7 578.1L483.7 740.4M552.9 579.2L505.3 743.9M565.4 580.2L527.4 747.4M577.9 581.3L549.9 750.9M590.6 582.4L572.8 754.6M603.4 583.5L596.2 758.3M616.3 584.6L620.0 762.0M629.4 585.7L644.3 765.9M642.6 586.9L669.0 769.8M656.0 588.0L694.3 773.8" fill="none" stroke="#303030" stroke-opacity="0.38" stroke-width="0.75"/><path d="M309.2 458.4L327.7 461.9C340 468 360 481 411.7 500.2L395.9 566.4L346 558.9L290.3 555.6Z" fill="url(#cl2)"/><rect x="308.7" y="457.9" width="19.5" height="19.3" fill="url(#stamp)"/><path d="M296 277C305 279.5 330 284.5 365 285C385 285.2 405 284.6 422 283.7C455 282.5 490 278.5 513 271.2L540.7 269.5C538 285 529 325 525.2 355C523.3 380 525 410 527 432.4C495 436 455 438 422 438C395 437.6 365 435 340 431.5C325 429.5 312 427.5 304.5 426C304.8 410 306.5 385 305.5 368C304 345 299.5 322 298.3 306C297.3 295 296.3 285 296 277Z" fill="url(#cl1)"/><path d="M296 277C305 279.5 330 284.5 365 285C385 285.2 405 284.6 421.8 283.9L422.3 437.8C395 437.6 365 435 340 431.5C325 429.5 312 427.5 304.5 426C304.8 410 306.5 385 305.5 368C304 345 299.5 322 298.3 306C297.3 295 296.3 285 296 277Z" fill="#8f8fb6" fill-opacity="0.93"/><path d="M324.6 322.5L348.9 316.1L354.2 374.2L331.2 373.4Z" fill="#a9d3ec" stroke="#c5e6f5" stroke-width="1"/><rect x="295.2" y="276.2" width="14" height="25" fill="url(#stamp)" opacity="0.8"/><rect x="297.5" y="279" width="10.5" height="21" fill="#9c3a6a" opacity="0.35"/><rect x="512.4" y="268.9" width="28.8" height="19.8" fill="url(#stamp)"/><path d="M296.1 277.0L321.2 280.5L350 284.2L380.6 285.2L421.8 283.9M299.5 310L324.6 322.5L348.9 316.1L380.6 319.6L421.8 324M306.7 373.4L331.2 373.4L354.2 374.2L388.2 376.3L421.2 380.5M305.1 426.2L328.3 429.7L352.1 432.8L385.3 436.3L422.3 437.8M296.1 277.0L299.5 310L306.7 373.4L305.1 426.2M321.2 280.5L324.6 322.5L331.2 373.4L328.3 429.7M350 284.2L348.9 316.1L354.2 374.2L352.1 432.8M380.6 285.2L380.6 319.6L388.2 376.3L385.3 436.3M421.8 283.9L421.8 324L421.2 380.5L422.3 437.8" fill="none" stroke="#4a9fc6" stroke-width="1.1"/><circle cx="296.1" cy="277.0" r="2.9" fill="#0b0b93"/><circle cx="321.2" cy="280.5" r="2.9" fill="#0b0b93"/><circle cx="350" cy="284.2" r="2.9" fill="#0b0b93"/><circle cx="380.6" cy="285.2" r="2.9" fill="#0b0b93"/><circle cx="421.8" cy="283.9" r="2.9" fill="#0b0b93"/><circle cx="299.5" cy="310" r="2.9" fill="#0b0b93"/><circle cx="324.6" cy="322.5" r="2.9" fill="#0b0b93"/><circle cx="348.9" cy="316.1" r="2.9" fill="#0b0b93"/><circle cx="380.6" cy="319.6" r="2.9" fill="#0b0b93"/><circle cx="421.8" cy="324" r="2.9" fill="#0b0b93"/><circle cx="306.7" cy="373.4" r="2.9" fill="#0b0b93"/><circle cx="331.2" cy="373.4" r="2.9" fill="#0b0b93"/><circle cx="354.2" cy="374.2" r="2.9" fill="#0b0b93"/><circle cx="388.2" cy="376.3" r="2.9" fill="#0b0b93"/><circle cx="421.2" cy="380.5" r="2.9" fill="#f7a81c"/><circle cx="305.1" cy="426.2" r="2.9" fill="#0b0b93"/><circle cx="328.3" cy="429.7" r="2.9" fill="#0b0b93"/><circle cx="352.1" cy="432.8" r="2.9" fill="#0b0b93"/><circle cx="385.3" cy="436.3" r="2.9" fill="#0b0b93"/><circle cx="422.3" cy="437.8" r="2.9" fill="#0b0b93"/></svg>
<svg style="left:622px;top:68.6px" width="417.7" height="590" viewBox="622 68.6 417.7 590"><defs>
<pattern id="stamp2" width="2.4" height="2.4" patternUnits="userSpaceOnUse"><rect width="2.4" height="2.4" fill="#f2a8aa"/><path d="M-0.2 -0.2L2.6 2.6M2.6 -0.2L-0.2 2.6" stroke="#e8303e" stroke-width="0.95" fill="none"/></pattern>
<pattern id="stamp3" width="2.4" height="2.4" patternUnits="userSpaceOnUse"><rect width="2.4" height="2.4" fill="#7f4f8c"/><path d="M-0.2 -0.2L2.6 2.6M2.6 -0.2L-0.2 2.6" stroke="#a92463" stroke-width="0.8" fill="none"/></pattern>
</defs><path d="M626.25 68.6V658.6M640.50 68.6V658.6M654.75 68.6V658.6M669.00 68.6V658.6M683.25 68.6V658.6M697.50 68.6V658.6M711.75 68.6V658.6M726.00 68.6V658.6M740.25 68.6V658.6M754.50 68.6V658.6M783.00 68.6V658.6M797.25 68.6V658.6M811.50 68.6V658.6M825.75 68.6V658.6M840.00 68.6V658.6M854.25 68.6V658.6M868.50 68.6V658.6M882.75 68.6V658.6M897.00 68.6V658.6M911.25 68.6V658.6M925.50 68.6V658.6M939.75 68.6V658.6M954.00 68.6V658.6M968.25 68.6V658.6M982.50 68.6V658.6M996.75 68.6V658.6M1011.00 68.6V658.6M1025.25 68.6V658.6M1039.50 68.6V658.6M622 78.25H1039.7M622 92.50H1039.7M622 106.75H1039.7M622 121.00H1039.7M622 135.25H1039.7M622 149.50H1039.7M622 163.75H1039.7M622 178.00H1039.7M622 192.25H1039.7M622 206.50H1039.7M622 220.75H1039.7M622 235.00H1039.7M622 249.25H1039.7M622 263.50H1039.7M622 277.75H1039.7M622 292.00H1039.7M622 306.25H1039.7M622 320.50H1039.7M622 334.75H1039.7M622 349.00H1039.7M622 363.25H1039.7M622 377.50H1039.7M622 391.75H1039.7M622 406.00H1039.7M622 420.25H1039.7M622 434.50H1039.7M622 448.75H1039.7M622 463.00H1039.7M622 477.25H1039.7M622 491.50H1039.7M622 505.75H1039.7M622 520.00H1039.7M622 534.25H1039.7M622 548.50H1039.7M622 577.00H1039.7M622 591.25H1039.7M622 605.50H1039.7M622 619.75H1039.7M622 634.00H1039.7M622 648.25H1039.7" stroke="#c5c5c5" stroke-width="0.9" fill="none"/><path d="M622 562.75H1039.7" stroke="#a2a2a2" stroke-width="1.1"/><path d="M768.75 68.6V658.6" stroke="#8e8e8e" stroke-width="1.1"/><rect x="815.3" y="224.8" width="96.7" height="137.7" fill="#bcbcbc" stroke="#a9a9a9" stroke-width="1"/><rect x="693.9" y="398" width="103.8" height="100.3" fill="#bcbcbc" stroke="#a9a9a9" stroke-width="1"/><path d="M768.75 398V498.3" stroke="#888" stroke-width="1.1"/><circle cx="912" cy="224.8" r="1.5" fill="#8e8e8e"/><circle cx="912" cy="362.5" r="1.5" fill="#8e8e8e"/><circle cx="693.9" cy="398" r="1.5" fill="#8e8e8e"/><circle cx="797.7" cy="398" r="1.5" fill="#8e8e8e"/><circle cx="693.9" cy="498.3" r="1.5" fill="#8e8e8e"/><circle cx="797.7" cy="498.3" r="1.5" fill="#8e8e8e"/><circle cx="815.3" cy="362.5" r="1.5" fill="#8e8e8e"/><circle cx="815.3" cy="224.6" r="1.6" fill="#1d1d5e"/><circle cx="815.3" cy="260.4" r="1.6" fill="#1d1d5e"/><rect x="888" y="222.8" width="25" height="16.2" fill="url(#stamp2)"/><rect x="693.5" y="397.2" width="19.2" height="17" fill="url(#stamp2)"/><rect x="681.4" y="224.8" width="115.3" height="137.7" fill="#68689c"/><path d="M768.75 224.8V362.5" stroke="#5c5c8e" stroke-width="1.1"/><path d="M704.4 263.7L730 255.6V311L706.7 310.3Z" fill="#5cc0f6"/><rect x="680.9" y="225" width="14" height="22.8" fill="url(#stamp3)"/><path d="M681.4 224.8L705.3 224.8L732 224.8L760.1 224.8L796.7 224.8M681.4 254.4L704.4 263.7L730 254.8L759.2 256.7L796.2 260.6M681.4 312L706.7 310.3L731 311L762 313.5L796.5 316M681.4 362.5L705.3 362.5L732 362.5L764 362.5L796.7 362.5M681.4 224.8L681.4 254.4L681.4 312L681.4 362.5M705.3 224.8L704.4 263.7L706.7 310.3L705.3 362.5M732 224.8L730 254.8L731 311L732 362.5M760.1 224.8L759.2 256.7L762 313.5L764 362.5M796.7 224.8L796.2 260.6L796.5 316L796.7 362.5" fill="none" stroke="#2f8fb3" stroke-width="1.2"/><circle cx="681.4" cy="224.8" r="2.4" fill="#1c84a6"/><circle cx="705.3" cy="224.8" r="2.4" fill="#1c84a6"/><circle cx="732" cy="224.8" r="2.4" fill="#1c84a6"/><circle cx="760.1" cy="224.8" r="2.4" fill="#1c84a6"/><circle cx="796.7" cy="224.8" r="2.4" fill="#1c84a6"/><circle cx="681.4" cy="254.4" r="2.4" fill="#1c84a6"/><circle cx="704.4" cy="263.7" r="2.4" fill="#1c84a6"/><circle cx="730" cy="254.8" r="2.4" fill="#1c84a6"/><circle cx="759.2" cy="256.7" r="2.4" fill="#1c84a6"/><circle cx="796.2" cy="260.6" r="2.4" fill="#1c84a6"/><circle cx="681.4" cy="312" r="2.4" fill="#1c84a6"/><circle cx="706.7" cy="310.3" r="2.4" fill="#1c84a6"/><circle cx="731" cy="311" r="2.4" fill="#1c84a6"/><circle cx="762" cy="313.5" r="2.4" fill="#1c84a6"/><circle cx="796.5" cy="316" r="2.4" fill="#1c84a6"/><circle cx="681.4" cy="362.5" r="2.4" fill="#1c84a6"/><circle cx="705.3" cy="362.5" r="2.4" fill="#1c84a6"/><circle cx="732" cy="362.5" r="2.4" fill="#1c84a6"/><circle cx="764" cy="362.5" r="2.4" fill="#1c84a6"/><circle cx="796.7" cy="362.5" r="2.4" fill="#1c84a6"/></svg>
<div style="left:628.6999999999999px;top:75.3px;width:14.4px;height:14.3px;background:#d3d3d3;border:1px solid #c0c0c0;"></div>
<div style="left:646.5999999999999px;top:75.3px;width:14.4px;height:14.3px;background:#d3d3d3;border:1px solid #c0c0c0;"></div>
<div style="left:664.6999999999999px;top:75.3px;width:14.4px;height:14.3px;background:#d3d3d3;border:1px solid #c0c0c0;"></div>
<div style="left:682.8px;top:75.3px;width:14.4px;height:14.3px;background:#d0d0d0;border:1px solid #adadad;"></div>
<div style="left:700.5999999999999px;top:75.3px;width:14.4px;height:14.3px;background:#d3d3d3;border:1px solid #c0c0c0;"></div>
<svg style="left:627.9px;top:74.5px" width="16" height="16" viewBox="0 0 16 16"><path d="M4 3L12.5 11" stroke="#2a2a2a" stroke-width="2.2"/><path d="M3 2L5.5 4.5" stroke="#d9a100" stroke-width="1.6"/><path d="M1.5 11.5C3 9.8 6 9.8 7.5 11.5C6 13 3 13 1.5 11.5Z" fill="#222"/></svg>
<svg style="left:645.8px;top:74.5px" width="16" height="16" viewBox="0 0 16 16"><path d="M5.2 4.6C6.5 5.6 9.5 5.6 10.8 4.6L14 7L12.5 9L11.3 8.2V13H4.7V8.2L3.5 9L2 7Z" fill="#fafafa" transform="translate(1,-1)"/><path d="M1.5 11.5C3 9.8 6 9.8 7.5 11.5C6 13 3 13 1.5 11.5Z" fill="#222"/></svg>
<svg style="left:663.9px;top:74.5px" width="16" height="16" viewBox="0 0 16 16"><circle cx="8.8" cy="7.2" r="5" fill="#2b2b2b"/><path d="M8.9 5V5.2M8.8 6.8V10" stroke="#f0a818" stroke-width="1.7"/><path d="M1.5 11.5C3 9.8 6 9.8 7.5 11.5C6 13 3 13 1.5 11.5Z" fill="#333"/></svg>
<svg style="left:682.0px;top:74.5px" width="16" height="16" viewBox="0 0 16 16"><path d="M3.5 5H11V12.5H3.5Z" fill="#f6f6f6"/><path d="M6 3L13.5 3.6L12.8 10.5L5.2 10Z" fill="#f6a510"/></svg>
<svg style="left:699.8px;top:74.5px" width="16" height="16" viewBox="0 0 16 16"><path d="M5.2 4.6C6.5 5.6 9.5 5.6 10.8 4.6L14 7L12.5 9L11.3 8.2V13H4.7V8.2L3.5 9L2 7Z" fill="#c9c9c9" transform="translate(1.5,-1.5)"/><rect x="3" y="8.5" width="4.5" height="4" fill="#c2c2c2" stroke="#adadad" stroke-width="0.6"/><path d="M4 8.5V7.2C4 6 6.5 6 6.5 7.2V8.5" fill="none" stroke="#b5b5b5" stroke-width="0.8"/></svg>
<svg style="left:718.2px;top:74.3px" width="16" height="16" viewBox="0 0 16 16"><path d="M8 1.5L12 5.5H9.6V8H6.4V5.5H4Z" fill="#7b7b7b"/><path d="M2.5 8.5V13.5H13.5V8.5H12V11H4V8.5Z" fill="#7b7b7b"/><path d="M5.5 11V12.6M7.2 11V12.6M8.9 11V12.6M10.6 11V12.6" stroke="#cfcfcf" stroke-width="0.7"/></svg>
<div style="left:837.5px;top:70px;width:202.5px;height:88px;background:#3a3b3d;"></div>
<div style="left:837.5px;top:70px;width:202.5px;height:13.3px;background:#2a2b2b;"></div>
<span style="left:900.30px;top:72.00px;font-size:8.4px;line-height:11.8px;color:#e4e4e4;transform-origin:0 50%;transform:scaleX(0.8285);">Check Sewing Length</span>
<svg style="left:1029.2px;top:73.5px" width="7" height="7" viewBox="0 0 7 7"><path d="M1.2 1.2L5.8 5.8M5.8 1.2L1.2 5.8" stroke="#8e8e8e" stroke-width="1"/></svg>
<div style="left:851px;top:96.4px;width:175px;height:47.6px;background:#2c2d2d;border:1px solid #424344;"></div>
<svg style="left:858px;top:106.2px" width="9" height="9" viewBox="0 0 9 9"><rect width="9" height="9" rx="1" fill="#f7c917"/><path d="M2 4.6L3.8 6.4L7 2.6" fill="none" stroke="#3a3000" stroke-width="1.3"/></svg>
<span style="left:869.00px;top:105.40px;font-size:8.4px;line-height:11.8px;color:#d2d2d2;transform-origin:0 50%;transform:scaleX(0.8722);">Length Difference</span>
<div style="left:960.5px;top:104px;width:41px;height:13.2px;background:#333435;border:1px solid #474849;"></div>
<svg style="left:993.5px;top:106.2px" width="7" height="9" viewBox="0 0 7 9"><path d="M1 3.4L3.5 0.8L6 3.4ZM1 5.6L3.5 8.2L6 5.6Z" fill="#7d7d7d"/></svg>
<div style="left:966.7px;top:107px;width:10.5px;height:7.8px;background:#f4f4f4;"></div>
<span style="left:967.00px;top:105.90px;font-size:8.4px;line-height:11.8px;color:#1f2a44;transform-origin:0 50%;transform:scaleX(0.8308);">5.0</span>
<span style="left:1008.00px;top:106.70px;font-size:8.4px;line-height:11.8px;color:#b5b5b5;transform-origin:0 50%;transform:scaleX(0.7503);">mm</span>
<svg style="left:858px;top:126px" width="9" height="9" viewBox="0 0 9 9"><rect width="9" height="9" rx="1" fill="#f7c917"/><path d="M2 4.6L3.8 6.4L7 2.6" fill="none" stroke="#3a3000" stroke-width="1.3"/></svg>
<span style="left:869.00px;top:125.60px;font-size:8.4px;line-height:11.8px;color:#d2d2d2;transform-origin:0 50%;transform:scaleX(0.8690);">Ratio Difference</span>
<div style="left:960.5px;top:124.2px;width:41px;height:13.2px;background:#333435;border:1px solid #474849;"></div>
<svg style="left:993.5px;top:126.4px" width="7" height="9" viewBox="0 0 7 9"><path d="M1 3.4L3.5 0.8L6 3.4ZM1 5.6L3.5 8.2L6 5.6Z" fill="#7d7d7d"/></svg>
<span style="left:966.70px;top:126.10px;font-size:8.4px;line-height:11.8px;color:#d2d2d2;transform-origin:0 50%;transform:scaleX(0.8075);">10.0</span>
<span style="left:1009.20px;top:125.90px;font-size:8.4px;line-height:11.8px;color:#c9c9c9;">%</span>
<div style="left:712px;top:278.4px;width:149.4px;height:97.2px;background:#2b2c2c;box-shadow:0 0 2px rgba(0,0,0,.45);"></div>
<span style="left:718.60px;top:283.00px;font-size:8.4px;line-height:11.8px;color:#6c6c6c;transform-origin:0 50%;transform:scaleX(0.8520);">Topology Options</span>
<div style="left:718px;top:296px;width:138px;height:1px;background:#303131;"></div>
<div style="left:718px;top:312px;width:138px;height:1px;background:#303131;"></div>
<div style="left:718px;top:328px;width:138px;height:1px;background:#303131;"></div>
<div style="left:718px;top:344.3px;width:138px;height:1px;background:#303131;"></div>
<span style="left:724.70px;top:299.05px;font-size:8.8px;line-height:12.3px;color:#e4e4e4;transform-origin:0 50%;transform:scaleX(0.9160);">Delete</span>
<span style="left:724.70px;top:314.75px;font-size:8.8px;line-height:12.3px;color:#e4e4e4;transform-origin:0 50%;transform:scaleX(0.9160);">Merge All</span>
<span style="left:724.70px;top:331.05px;font-size:8.8px;line-height:12.3px;color:#f39a12;transform-origin:0 50%;transform:scaleX(0.9372);">Add Division (Current Pattern)</span>
<span style="left:724.70px;top:346.85px;font-size:8.8px;line-height:12.3px;color:#e4e4e4;transform-origin:0 50%;transform:scaleX(0.9419);">Convert (Duplicate)</span>
<span style="left:724.70px;top:361.65px;font-size:8.8px;line-height:12.3px;color:#e4e4e4;transform-origin:0 50%;transform:scaleX(0.9216);">Convert (Replace)</span>
<svg style="left:747px;top:335px" width="22" height="30" viewBox="0 0 22 30"><path d="M2.7 2.6V22.4L7.6 17.9L11.6 26.6L15.2 25L11.2 16.5H17.6Z" fill="#fff" stroke="#111" stroke-width="1.3" stroke-linejoin="round"/></svg>
<svg style="left:1043.5px;top:33.5px" width="9" height="9" viewBox="0 0 9 9"><path d="M1.6 3.5H4.6V2.2L7.4 4.5L4.6 6.8V5.5H1.6Z" fill="#c9c9c9"/></svg>
<div style="left:1052.5px;top:33px;width:1px;height:11px;background:#353636;"></div>
<span style="left:1140.75px;top:33.30px;font-size:8.4px;line-height:11.8px;color:#c4c4c4;transform-origin:0 50%;transform:scaleX(0.8228);">Fabric</span>
<svg style="left:1195px;top:33.5px" width="10" height="10" viewBox="0 0 10 10"><circle cx="5" cy="5" r="4.6" fill="#232424"/><path d="M3.4 4.2H6.6L5 6.2Z" fill="#bdbdbd"/></svg>
<svg style="left:1257.3px;top:34.6px" width="7" height="7" viewBox="0 0 8 8"><path d="M1 3.5V7H5V5M4 1.5H7V4.5M7 1.5L3.5 5" fill="none" stroke="#707172" stroke-width="1.1"/></svg>
<svg style="left:1267.3px;top:34.8px" width="6.4" height="6.4" viewBox="0 0 8 8"><path d="M1.5 1.5L6.5 6.5M6.5 1.5L1.5 6.5" fill="none" stroke="#bdbdbd" stroke-width="1.3"/></svg>
<div style="left:1050.3px;top:51.8px;width:48.700000000000045px;height:17.8px;background:#363738;border:1.4px solid #666768;"></div>
<span style="left:1067.90px;top:56.00px;font-size:8.4px;line-height:11.8px;color:#dedede;transform-origin:0 50%;transform:scaleX(0.8832);">Add</span>
<div style="left:1105px;top:51.8px;width:48.5px;height:17.8px;background:#38393a;border:1.4px solid #555657;"></div>
<span style="left:1120.75px;top:56.00px;font-size:8.4px;line-height:11.8px;color:#5f6061;transform-origin:0 50%;transform:scaleX(0.8517);">Copy</span>
<div style="left:1160px;top:51.8px;width:48px;height:17.8px;background:#38393a;border:1.4px solid #555657;"></div>
<span style="left:1173.50px;top:56.00px;font-size:8.4px;line-height:11.8px;color:#5f6061;transform-origin:0 50%;transform:scaleX(0.8210);">Assign</span>
<div style="left:1214.4px;top:51.8px;width:54.59999999999991px;height:17.8px;background:#363738;border:1.4px solid #666768;"></div>
<span style="left:1217.95px;top:56.00px;font-size:8.4px;line-height:11.8px;color:#dedede;transform-origin:0 50%;transform:scaleX(0.8495);">Delete Unused</span>
<svg style="left:1067px;top:96px" width="9" height="8" viewBox="0 0 9 8"><path d="M1.4 3.6L3.5 5.9L7.6 1.8" fill="none" stroke="#f5c518" stroke-width="2"/></svg>
<div style="left:1087px;top:89px;width:24.3px;height:24px;background:#ffffff;"></div>
<span style="left:1117.00px;top:96.70px;font-size:8.4px;line-height:11.8px;color:#bdbdbd;transform-origin:0 50%;transform:scaleX(0.8221);">FABRIC 1</span>
<div style="left:1056px;top:119px;width:208px;height:1px;background:#313232;"></div>
<svg style="left:1043.8px;top:284.0px" width="9" height="9" viewBox="0 0 9 9"><path d="M1.6 3.5H4.6V2.2L7.4 4.5L4.6 6.8V5.5H1.6Z" fill="#c9c9c9"/></svg>
<div style="left:1052.5px;top:284px;width:1px;height:11px;background:#353636;"></div>
<span style="left:1126.00px;top:284.60px;font-size:8.4px;line-height:11.8px;color:#c4c4c4;transform-origin:0 50%;transform:scaleX(0.8693);">Property Editor</span>
<svg style="left:1195px;top:284.6px" width="10" height="10" viewBox="0 0 10 10"><circle cx="5" cy="5" r="4.6" fill="#232424"/><path d="M3.4 4.2H6.6L5 6.2Z" fill="#bdbdbd"/></svg>
<svg style="left:1257.3px;top:285.8px" width="7" height="7" viewBox="0 0 8 8"><path d="M1 3.5V7H5V5M4 1.5H7V4.5M7 1.5L3.5 5" fill="none" stroke="#707172" stroke-width="1.1"/></svg>
<svg style="left:1267.3px;top:286.0px" width="6.4" height="6.4" viewBox="0 0 8 8"><path d="M1.5 1.5L6.5 6.5M6.5 1.5L1.5 6.5" fill="none" stroke="#bdbdbd" stroke-width="1.3"/></svg>
<svg style="left:1052.5px;top:309px" width="6" height="5" viewBox="0 0 6 5"><path d="M0.6 1L5.4 1L3 4Z" fill="#666768"/></svg>
<span style="left:1062.70px;top:305.50px;font-size:8.4px;line-height:11.8px;color:#e79a14;transform-origin:0 50%;transform:scaleX(0.8973);">Information</span>
<div style="left:1058px;top:319px;width:196px;height:1px;background:#434445;"></div>
<span style="left:1066.00px;top:321.60px;font-size:8.4px;line-height:11.8px;color:#c6c6c6;transform-origin:0 50%;transform:scaleX(0.8123);">Name</span>
<svg style="left:11px;top:7px" width="20" height="21" viewBox="11 7 20 21">
<defs><linearGradient id="lg1" x1="0" y1="0" x2="1" y2="0.3"><stop offset="0" stop-color="#f8941d"/><stop offset="1" stop-color="#ee4f22"/></linearGradient></defs>
<path d="M20.7 8.3L28.9 12.75V21.65L20.7 26.1L12.5 21.65V12.75Z" fill="#f9a21c"/>
<path d="M20.7 8.3L28.9 12.75L20.7 17.4L12.5 12.75Z" fill="url(#lg1)"/>
<path d="M12.5 12.75L20.7 17.4V26.1L12.5 21.65Z" fill="#f6881d"/>
<path d="M13.6 14.4L20.7 18L27.8 14.4V16.3L20.7 20.2L13.6 16.3Z" fill="#1d2336"/>
<path d="M15.2 18.6L18.2 20.2L16 21ZM26.2 18.6L23.2 20.2L25.4 21Z" fill="#2a1a14"/>
</svg>
<div style="left:1111px;top:7.8px;width:101px;height:17.4px;background:#333435;"></div>
<svg style="left:1115.3px;top:11.3px" width="11" height="11" viewBox="0 0 11 11"><path d="M5.5 1.2L7 3.6H9.8L8.4 5.9L9.8 8.6H7L5.5 10L4 8.6H1.2L2.6 5.9L1.2 3.6H4Z" fill="none" stroke="#e2e2e2" stroke-width="1.9" stroke-linejoin="round"/></svg>
<span style="left:1130.30px;top:11.10px;font-size:9.6px;line-height:13.4px;color:#ececec;transform-origin:0 50%;transform:scaleX(0.8976);font-weight:bold;">EveryWear (Beta)</span>
<div style="left:1228.7px;top:11.2px;width:11.2px;height:9.6px;background:#323334;"></div>
<svg style="left:1228.7px;top:11.6px" width="11.3" height="9.2" viewBox="0 0 11.3 9.2"><path d="M3.5 4.5H7.5" fill="none" stroke="#c4c4c4" stroke-width="1.1"/></svg>
<div style="left:1243.3px;top:11.2px;width:11.2px;height:9.6px;background:#323334;"></div>
<svg style="left:1243.3px;top:11.6px" width="11.3" height="9.2" viewBox="0 0 11.3 9.2"><path d="M3.2 2.5H8V6.8H3.2ZM3.2 3.4H8" fill="none" stroke="#9a9a9a" stroke-width="1.1"/></svg>
<div style="left:1258px;top:11.2px;width:11.2px;height:9.6px;background:#323334;"></div>
<svg style="left:1258px;top:11.6px" width="11.3" height="9.2" viewBox="0 0 11.3 9.2"><path d="M3.7 2.7L7.5 6.5M7.5 2.7L3.7 6.5" fill="none" stroke="#c4c4c4" stroke-width="1.1"/></svg>
<span style="left:385.55px;top:33.40px;font-size:8.4px;line-height:11.8px;color:#c4c4c4;transform-origin:0 50%;transform:scaleX(0.8196);">3D Window</span>
<svg style="left:447px;top:33.5px" width="10" height="10" viewBox="0 0 10 10"><circle cx="5" cy="5" r="4.6" fill="#232424"/><path d="M3.4 4.2H6.6L5 6.2Z" fill="#bdbdbd"/></svg>
<svg style="left:608.5999999999999px;top:34.6px" width="7" height="7" viewBox="0 0 8 8"><path d="M1 3.5V7H5V5M4 1.5H7V4.5M7 1.5L3.5 5" fill="none" stroke="#707172" stroke-width="1.1"/></svg>
<span style="left:790.50px;top:33.40px;font-size:8.4px;line-height:11.8px;color:#c4c4c4;transform-origin:0 50%;transform:scaleX(0.8527);">2D Pattern Window</span>
<svg style="left:865.5px;top:33.5px" width="10" height="10" viewBox="0 0 10 10"><circle cx="5" cy="5" r="4.6" fill="#232424"/><path d="M3.4 4.2H6.6L5 6.2Z" fill="#bdbdbd"/></svg>
<svg style="left:1031.8px;top:34.6px" width="7" height="7" viewBox="0 0 8 8"><path d="M1 3.5V7H5V5M4 1.5H7V4.5M7 1.5L3.5 5" fill="none" stroke="#707172" stroke-width="1.1"/></svg>
<div style="left:1276.2px;top:0px;width:3.8px;height:720px;background:#2b2c2c;"></div>
<div style="left:0px;top:0px;width:1280px;height:1.2px;background:#0c0c0c;"></div>
<div style="left:0px;top:684px;width:1280px;height:36px;background:#2b2c2b;"></div>
<div style="left:1044px;top:661.8px;width:232px;height:1px;background:#454647;"></div>
<svg style="left:671px;top:668.5px" width="9" height="8" viewBox="0 0 9 8"><path d="M4.5 1L8.2 7H0.8Z" fill="#d0d0d0"/><path d="M4.5 3.6L6.2 6.2H2.8Z" fill="#555"/></svg>
<svg style="left:1180.5px;top:667px" width="12" height="11" viewBox="0 0 12 11"><rect x="0.6" y="0.6" width="10.8" height="9.8" rx="1" fill="none" stroke="#808080" stroke-width="1"/><path d="M0.6 2.6H11.4" stroke="#808080"/></svg>
<svg style="left:1200px;top:667px" width="12" height="11" viewBox="0 0 12 11"><rect x="0.6" y="0.6" width="4.4" height="9.8" rx="1" fill="none" stroke="#808080"/><rect x="7" y="0.6" width="4.4" height="9.8" rx="1" fill="none" stroke="#808080"/></svg>
<svg style="left:1219.5px;top:667px" width="12" height="11" viewBox="0 0 12 11"><rect x="0.6" y="0.6" width="3.4" height="9.8" rx="1" fill="none" stroke="#808080"/><rect x="6" y="0.6" width="5.4" height="3.8" rx="1" fill="none" stroke="#808080"/><rect x="6" y="6.6" width="5.4" height="3.8" rx="1" fill="none" stroke="#808080"/></svg>
<svg style="left:1238.5px;top:667px" width="12" height="11" viewBox="0 0 12 11"><rect x="0.6" y="0.6" width="4.4" height="3.8" rx="1" fill="none" stroke="#808080"/><rect x="7" y="0.6" width="4.4" height="3.8" rx="1" fill="none" stroke="#808080"/><rect x="0.6" y="6.6" width="4.4" height="3.8" rx="1" fill="none" stroke="#808080"/><rect x="7" y="6.6" width="4.4" height="3.8" rx="1" fill="none" stroke="#808080"/></svg>
<svg style="left:1258px;top:667px" width="12" height="11" viewBox="0 0 12 11"><rect x="0.6" y="0.6" width="10.8" height="9.8" rx="1" fill="none" stroke="#808080" stroke-width="1"/><path d="M8 5.5A2.3 2.3 0 1 1 6.3 3.3M6 2L7.8 3.4L6 4.6" fill="none" stroke="#808080" stroke-width="0.9"/></svg>
<div style="left:215.3px;top:76px;width:13.4px;height:13.4px;background:#47484a;border:1px solid #505153;"></div>
<div style="left:233.4px;top:76px;width:13.4px;height:13.4px;background:#47484a;border:1px solid #505153;"></div>
<div style="left:269.4px;top:76px;width:13.4px;height:13.4px;background:#4d4e51;border:1px solid #606163;"></div>
<div style="left:287.5px;top:76px;width:13.4px;height:13.4px;background:#47484a;border:1px solid #505153;"></div>
<div style="left:305.5px;top:76px;width:13.4px;height:13.4px;background:#47484a;border:1px solid #505153;"></div>
<div style="left:323.4px;top:76px;width:13.4px;height:13.4px;background:#47484a;border:1px solid #505153;"></div>
<div style="left:341.4px;top:76px;width:13.4px;height:13.4px;background:#47484a;border:1px solid #505153;"></div>
<svg style="left:214.0px;top:74.7px" width="16" height="16" viewBox="0 0 16 16"><path d="M6 4L10.5 2.8L13.5 5V10L9.5 12.5V7Z" fill="#9c9c9c"/><path d="M6 4L9.5 7V12.5L3.5 11.5L2.5 13H6.5L9.5 12.5" fill="#c9c9c9"/><path d="M6 4L9.5 7L13.5 5L10.5 2.8Z" fill="#b5b5b5"/><path d="M9.5 12.5L13.5 10V12.2L10 13.6Z" fill="#1e1e1e"/></svg>
<svg style="left:232.1px;top:74.7px" width="16" height="16" viewBox="0 0 16 16"><path d="M5.2 4.6C6.5 5.6 9.5 5.6 10.8 4.6L14 7L12.5 9L11.3 8.2V13H4.7V8.2L3.5 9L2 7Z" fill="#f2f2f2" transform="translate(0,-0.8)"/><rect x="3" y="11.5" width="1.5" height="1.5" fill="#111"/></svg>
<svg style="left:250.1px;top:74.7px" width="16" height="16" viewBox="0 0 16 16"><g fill="#f4c21a"><circle cx="4.5" cy="11.5" r="1.9"/><circle cx="8.6" cy="12" r="1.9"/><circle cx="12" cy="9.5" r="1.8"/><circle cx="12.2" cy="5.6" r="1.6"/><circle cx="9.5" cy="3.4" r="1.4"/><circle cx="6" cy="4.6" r="1.4"/><circle cx="4" cy="7.8" r="1.5"/></g><circle cx="8" cy="8" r="2.6" fill="#3a3522"/></svg>
<svg style="left:268.1px;top:74.7px" width="16" height="16" viewBox="0 0 16 16"><circle cx="8.3" cy="5.2" r="2.7" fill="#f4f4f4"/><path d="M3.5 13.5C3.5 10.5 5.5 9 8.3 9C11 9 13 10.5 13 13.5Z" fill="#ececec"/><path d="M2.5 12.5H5.5" stroke="#999" stroke-width="1.2"/></svg>
<svg style="left:286.2px;top:74.7px" width="16" height="16" viewBox="0 0 16 16"><path d="M4 5L8 3.5L12.5 4L11.5 11.5L5 12.5L3.5 9Z" fill="#ededed"/><path d="M4 5L8 6.5L7 12.2" stroke="#bdbdbd" stroke-width="0.8" fill="none"/></svg>
<svg style="left:304.2px;top:74.7px" width="16" height="16" viewBox="0 0 16 16"><path d="M3.5 9.5L11.5 4L12.5 9.5L6 12Z" fill="#d4d4d4"/><path d="M3.5 9.5L6 12L12.5 9.5L9 10Z" fill="#8a8a8a"/></svg>
<svg style="left:322.1px;top:74.7px" width="16" height="16" viewBox="0 0 16 16"><path d="M8.2 2.2C11 2.2 12 4.5 11.5 7C11.2 8.8 10.6 9.6 10.4 10.6L13 13.5H3.5L6 10.6C5.6 9.6 5 8.8 4.8 7C4.4 4.5 5.4 2.2 8.2 2.2Z" fill="#f1f1f1"/></svg>
<svg style="left:340.1px;top:74.7px" width="16" height="16" viewBox="0 0 16 16"><circle cx="8" cy="7.6" r="5.2" fill="#f09a12"/><path d="M8 2.4C5.5 4.5 5.5 10.5 8 12.8M4 5.2C6.5 6.4 10.5 6.4 12.5 5M8.8 2.6C11 5 10.6 9 9.6 12.4" stroke="#c86f08" stroke-width="1" fill="none"/><rect x="2.5" y="12" width="1.6" height="1.6" fill="#111"/></svg>
<svg style="left:358.5px;top:74.7px" width="16" height="16" viewBox="0 0 16 16"><path d="M8 1.5L12 5.5H9.6V8H6.4V5.5H4Z" fill="#9b9b9b"/><path d="M2.5 8.5V13.5H13.5V8.5H12V11H4V8.5Z" fill="#9b9b9b"/><path d="M5.5 11V12.6M7.2 11V12.6M8.9 11V12.6M10.6 11V12.6" stroke="#4a4a4a" stroke-width="0.7"/></svg>
<svg style="left:1050px;top:645px" width="226" height="70" viewBox="1050 645 226 70" fill="#ffffff" fill-opacity="0.125">
<path d="M1085 689m-25 0a25 12.5 0 1 0 50 0a25 12.5 0 1 0 -50 0M1085 687.5m-15.5 0a15.5 6 0 1 0 31 0a15.5 6 0 1 0 -31 0" fill-rule="evenodd"/>
<path d="M1101 654C1094 664 1089.5 671 1091 677.5C1092.5 681.5 1098 680 1106 677C1099 686 1088.5 690 1084.5 684C1080.5 676.5 1090 663.5 1101 654Z"/>
<path d="M1064 679l4-3.5 4 2.5-3.5 3.5zM1061 694.5l-3.5 3.5 5 3.5 3.5-3zM1074 700.5l-1.5 3.5 7 1.2 1-3.8zM1094.5 701.5l1.5 3.5 6.5-1.8-1.8-3.6zM1106.5 695.5l4 2.5 2.5-4.2-4.5-2.2zM1105.5 680l4-2.5 2.5 3.5-4.5 2.5z"/>
<text x="1131.8" y="678.6" font-family="'Liberation Sans',sans-serif" font-weight="bold" font-size="34.4" textLength="133" lengthAdjust="spacingAndGlyphs">GNOMON</text>
<text x="1117.4" y="702.9" font-family="'Liberation Sans',sans-serif" font-weight="bold" font-size="26.4" textLength="147.3" lengthAdjust="spacingAndGlyphs">WORKSHOP</text>
<text transform="translate(1127.4,677.8) rotate(-90)" font-family="'Liberation Sans',sans-serif" font-weight="bold" font-size="14" textLength="23.4" lengthAdjust="spacingAndGlyphs">THE</text>
</svg>
</div></body></html>
